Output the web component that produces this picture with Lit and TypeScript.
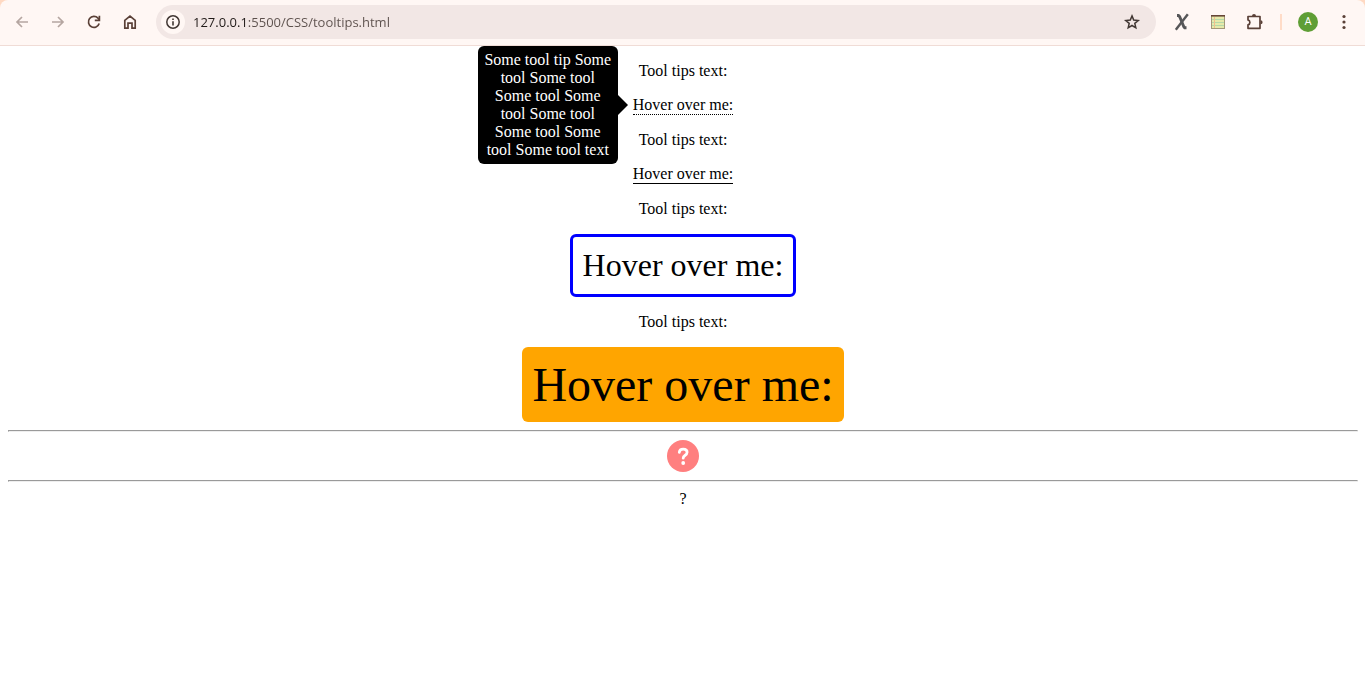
import { LitElement, html, css, svg } from "lit";
import { customElement, property } from "lit/decorators.js";

@customElement("browser-toolbar")
class BrowserToolbar extends LitElement {
  static styles = css`
    :host { display: block; background: #ffd9c2; }
    .bar {
      display: flex; align-items: center; box-sizing: border-box; height: 46px;
      padding: 0 3px 2px 4px; background: #fff7f4; color: #5a4037;
      border-bottom: 1px solid #f0dcd6; border-radius: 8px 8px 0 0;
    }
    button {
      display: flex; align-items: center; justify-content: center; flex: none;
      width: 36px; height: 34px; padding: 0; border: 0; background: none; color: inherit;
    }
    button:disabled { color: #b5a6a1; }
    svg { display: block; }
    .address {
      display: flex; align-items: center; flex: 1; min-width: 0; height: 34px;
      margin: 0 8px; padding: 0 6px 0 5px; box-sizing: border-box;
      border-radius: 17px; background: #f2e7e5; color: #413733;
    }
    .address .info { width: 24px; height: 24px; border-radius: 12px; background: #fff7f4; }
    .url {
      flex: 1; min-width: 0; padding: 0 8px; border: 0; outline: 0;
      font: 13px/20px "Open Sans", "Noto Sans", sans-serif;
      color: transparent;
      background: linear-gradient(90deg, #201a18 63px, #5c504c 63px);
      -webkit-background-clip: text; background-clip: text;
    }
    .divider { width: 2px; height: 16px; margin: 0 8px; background: #ffdcc8; }
    .avatar {
      display: flex; align-items: center; justify-content: center;
      width: 20px; height: 20px; border-radius: 10px; background: #5f9e35; color: #fff;
      font: 11px/20px Roboto, sans-serif;
    }
  `;

  private icon(body: unknown, size = 18) {
    return html`<svg width=${size} height=${size} viewBox="0 0 ${size} ${size}" fill="none"
      stroke="currentColor" stroke-width="1.7" aria-hidden="true">${body}</svg>`;
  }

  render() {
    return html`
      <div class="bar">
        <button disabled aria-label="Back">${this.icon(svg`<path d="M15 9H4M9 4 4 9l5 5"/>`)}</button>
        <button disabled aria-label="Forward">${this.icon(svg`<path d="M3 9h11M9 4l5 5-5 5"/>`)}</button>
        <button aria-label="Reload">${this.icon(svg`<path d="M14.2 10.6A5.5 5.5 0 1 1 13 5.2L14.4 6.8"/><path d="M14.4 2.7v4.6H9.8"/>`)}</button>
        <button aria-label="Home">${this.icon(svg`<path d="M3.800 15.200V7.300L9 3.100l5.200 4.200v7.900h-3.200v-5H7v5z"/>`)}</button>
        <div class="address">
          <button class="info" aria-label="View site information">
            ${this.icon(svg`<circle cx="9" cy="9" r="6.2" stroke-width="1.5"/><path d="M9 8.2v4.2M9 5.4v1.6" stroke-width="1.6"/>`)}
          </button>
          <input class="url" type="text" aria-label="Address" value="127.0.0.1:5500/CSS/tooltips.html" />
          <button aria-label="Bookmark this page">
            ${this.icon(svg`<path stroke-width="1.5" d="m9 2.9 1.7 4.2 4.5.4-3.4 2.9 1 4.4L9 12.5l-3.8 2.3 1-4.4-3.4-2.9 4.5-.4z"/>`)}
          </button>
        </div>
        <button aria-label="X extension">
          ${this.icon(svg`<g stroke="#565658"><path stroke-width="2.900" stroke-linejoin="round" d="M4 2.500h1.600l1.100 1.300 4 9.700 1 1.200h1.800"/><path stroke-width="2.400" d="M14.800 1.300 2.800 16.700"/></g>`)}
        </button>
        <button aria-label="Notes extension">
          ${this.icon(svg`<rect x="2.500" y="2.500" width="13" height="13" fill="#e6eaaa" stroke="#a39779" stroke-width="1"/>
            <path d="M2 2.800h14" stroke="#664637" stroke-width="1.600"/>
            <path d="M3 6.500h12M3 9.500h12M3 12.500h12" stroke="#b5d8a8" stroke-width="1"/>
            <path d="M5.500 4v11" stroke="#f1c08e" stroke-width="1"/>`)}
        </button>
        <button aria-label="Extensions">
          ${this.icon(svg`<path stroke-linejoin="round" d="M3 3.500h12v11.800H3v-3.400a2.600 2.600 0 0 0 0-5z"/><path stroke="none" fill="currentColor" d="M7 3a2 2 0 0 1 4 0zM15.600 7.200a2 2 0 0 1 0 4z"/>`)}
        </button>
        <div class="divider"></div>
        <button aria-label="Profile"><span class="avatar">A</span></button>
        <button aria-label="Menu">
          ${this.icon(svg`<g fill="currentColor" stroke="none"><circle cx="9" cy="3.500" r="1.600"/><circle cx="9" cy="9" r="1.600"/><circle cx="9" cy="14.500" r="1.600"/></g>`)}
        </button>
      </div>`;
  }
}

@customElement("tool-tip")
class ToolTip extends LitElement {
  @property() variant = "dotted";
  @property({ type: Boolean }) open = false;
  @property() tip = "Some tool text";

  static styles = css`
    :host { display: block; position: relative; }
    .trigger {
      display: block; padding: 0; border: 0; background: none; color: #000;
      font: 16px/18px "Liberation Serif", "Times New Roman", serif;
    }
    .dotted { border-bottom: 1px dotted #000; }
    .solid { border-bottom: 1px solid #000; }
    .outlined { padding: 10px; border: 3px solid #00f; border-radius: 6px; font-size: 32px; line-height: 37px; }
    .filled { padding: 10px; border-radius: 6px; background: #ffa500; font-size: 48px; line-height: 55px; }
    .bubble {
      position: absolute; z-index: 1; top: -50px; right: 115%; width: 140px; box-sizing: border-box;
      padding: 5px; border-radius: 6px; background: #000; color: #fff; text-align: center;
    }
    .bubble::after {
      content: ""; position: absolute; left: 100%; top: 50%; margin-top: -10px;
      border: 10px solid transparent; border-left-color: #000; border-right-width: 0;
    }
  `;

  render() {
    return html`
      <button class="trigger ${this.variant}" aria-describedby="tip">Hover over me:</button>
      ${this.open ? html`<div class="bubble" id="tip" role="tooltip">${this.tip}</div>` : ""}`;
  }
}

@customElement("app-root")
class AppRoot extends LitElement {
  static styles = css`
    :host {
      display: block; min-height: 100vh; background: #fff; color: #000;
      font: 16px/18px "Liberation Serif", "Times New Roman", serif;
    }
    main { display: flex; flex-direction: column; align-items: center; padding: 0 7px 0 8px; }
    p { margin: 16px 0; }
    hr { align-self: stretch; margin: 8px 0; }
    .help { display: block; padding: 0; border: 0; background: none; }
    .help svg { display: block; }
  `;

  render() {
    return html`
      <browser-toolbar></browser-toolbar>
      <main>
        <p>Tool tips text:</p>
        <tool-tip variant="dotted" open
          tip="Some tool tip Some tool Some tool Some tool Some tool Some tool Some tool Some tool Some tool text"></tool-tip>
        <p>Tool tips text:</p>
        <tool-tip variant="solid"></tool-tip>
        <p>Tool tips text:</p>
        <tool-tip variant="outlined"></tool-tip>
        <p>Tool tips text:</p>
        <tool-tip variant="filled"></tool-tip>
        <hr />
        <button class="help" aria-label="Help">
          <svg width="32" height="32" viewBox="0 0 32 32" fill="none">
            <circle cx="16" cy="16" r="16" fill="#ff7f7f"/>
            <path d="M12.300 12.300c.2-2 1.700-3.200 3.900-3.200 2.300 0 3.900 1.200 3.900 3.200 0 1.600-1 2.400-2.200 3.200-1.200.8-1.700 1.400-1.700 2.700" stroke="#fff" stroke-width="2.800" stroke-linecap="round"/>
            <circle cx="16.200" cy="23" r="1.900" fill="#fff"/>
          </svg>
        </button>
        <hr />
        <div>?</div>
      </main>`;
  }
}
